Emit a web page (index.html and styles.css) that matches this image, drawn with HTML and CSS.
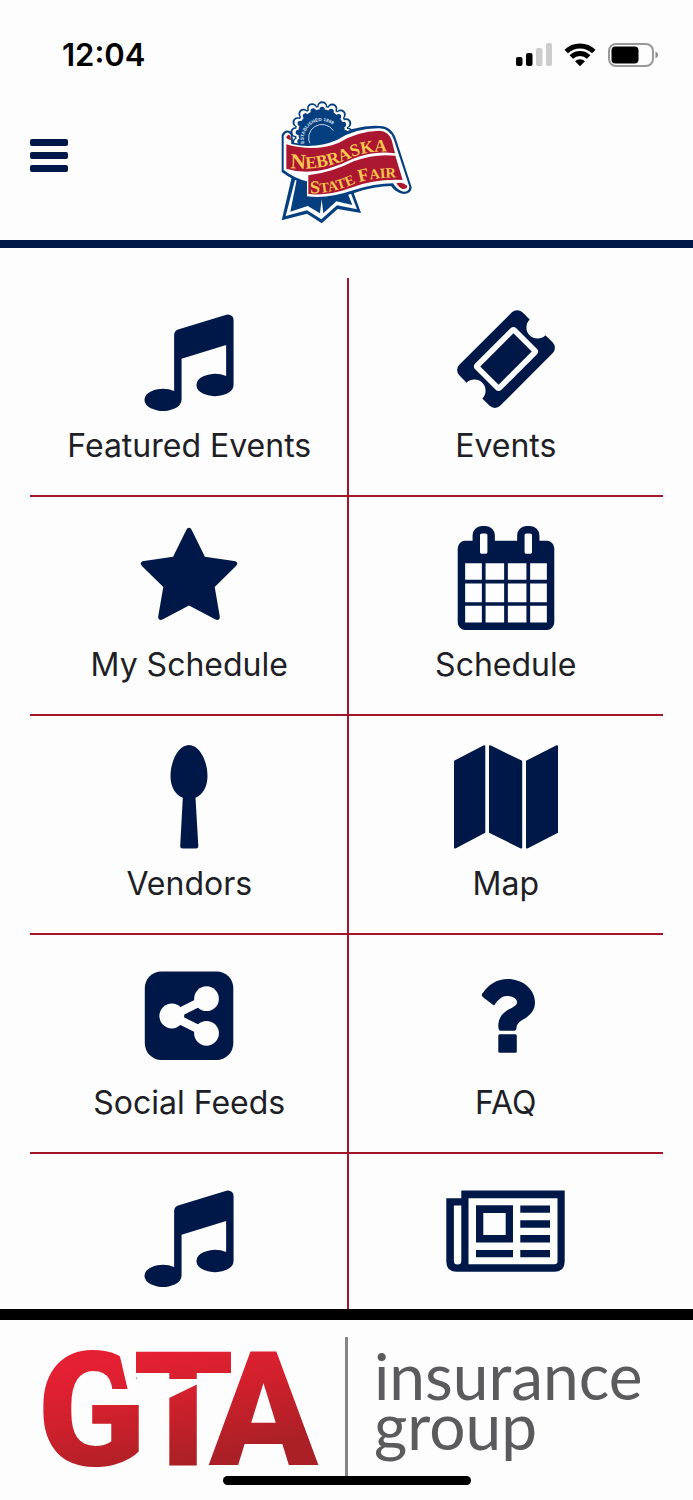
FILE: index.html
```html
<!DOCTYPE html>
<html lang="en">
<head>
<meta charset="utf-8">
<meta name="viewport" content="width=device-width, initial-scale=1">
<title>Nebraska State Fair</title>
<link rel="stylesheet" href="styles.css">
</head>
<body class="app">
<div class="status">
  <time class="status-time">12:04</time>
  <div class="status-icons">
    <svg class="signal" viewBox="0 0 36 24" aria-hidden="true">
      <rect x="0" y="14" width="6.500" height="9" rx="2"/>
      <rect x="10" y="10" width="6.500" height="13" rx="2"/>
      <rect class="dim" x="20" y="5" width="6.500" height="18" rx="2"/>
      <rect class="dim" x="30" y="0" width="6" height="23" rx="2"/>
    </svg>
    <svg class="wifi" viewBox="0 0 32 24" aria-hidden="true">
      <path class="wave" d="M2.200 8.600a19.500 19.500 0 0 1 27.600 0M7.300 14a12.300 12.300 0 0 1 17.400 0"/>
      <path d="M16 23.300l5-5a7 7 0 0 0-10 0z"/>
    </svg>
    <svg class="battery" viewBox="0 0 50 24" aria-hidden="true">
      <rect class="shell" x="1" y="1" width="44" height="22" rx="7"/>
      <rect x="3.500" y="3.500" width="27" height="17" rx="4"/>
      <path class="cap" d="M47.500 8.500q2.500 1 2.500 3.500t-2.500 3.500z"/>
    </svg>
  </div>
</div>

<header class="header">
  <button class="menu" type="button" aria-label="Menu"><span></span><span></span><span></span></button>
  <svg class="fair-logo" viewBox="48 30 396 372" role="img" aria-label="Nebraska State Fair">
    <path class="blue" d="M84 245L50 391L126 371L170 400L218 357L288 369L252 270z"/>
    <path class="white" d="M94 255L62 378L126 361L169 388L216 346L276 358L246 280z"/>
    <path class="blue" d="M98 255L76 365L128 348L165 370L170 328L175 370L214 334L262 345L240 290z"/>
    <circle class="blue" cx="170" cy="128" r="81"/>
    <circle class="beads blue-line wide" cx="170" cy="128" r="79" pathLength="16"/>
    <circle class="white" cx="170" cy="128" r="77"/>
    <circle class="beads white-line mid" cx="170" cy="128" r="77" pathLength="16"/>
    <circle class="blue" cx="170" cy="128" r="70"/>
    <circle class="beads blue-line small" cx="170" cy="128" r="70" pathLength="16"/>
    <path class="arc" d="M137 165A38 38 0 0 1 205 122"/>
    <path class="blue" d="M50 134Q62 112 82 128L84 158Q160 168 212 142Q270 104 345 108Q382 110 394 150L440 292Q440 312 415 312Q392 308 378 288Q330 288 270 308Q190 334 118 326V280Q85 272 50 246z"/>
    <path class="white" d="M56 137Q66 120 77 134L79 162Q150 178 216 150Q272 114 343 115Q376 116 387 150L433 290Q433 305 415 305Q396 300 384 280Q330 280 264 301Q190 327 126 319V274Q90 266 56 240z"/>
    <path class="red" d="M63 142Q71 128 76 139L78 150Q70 152 63 142z"/>
    <path class="red" d="M64 163Q150 188 222 158Q276 124 343 122Q370 123 380 150L390 190Q330 180 264 206Q150 264 64 236z"/>
    <path class="red" d="M130 256Q200 248 266 214Q330 190 391 197L413 270Q330 266 258 293Q190 318 130 312z"/>
    <path class="red" d="M394 280Q412 274 427 288Q427 298 412 297Q402 293 394 280z"/>
    <path id="seal-line" fill="none" d="M118 160A54 54 0 1 1 224 154"/>
    <path id="name-line" fill="none" d="M76 234Q170 244 256 204Q316 178 396 186"/>
    <path id="fair-line" fill="none" d="M136 310Q200 310 262 284Q320 260 420 262"/>
    <text class="seal-text"><textPath href="#seal-line">ESTABLISHED 1868</textPath></text>
    <text class="name-text"><textPath href="#name-line"><tspan class="initial">N</tspan>EBRASKA</textPath></text>
    <text class="name-text fair-text"><textPath href="#fair-line"><tspan class="initial">S</tspan>TATE <tspan class="initial">F</tspan>AIR</textPath></text>
  </svg>
</header>

<main class="content">
  <nav class="tiles">
    <a class="tile" href="#featured">
      <svg class="icon" viewBox="0 0 1792 1792" aria-hidden="true"><path d="M1664 224v1120q0 50-34 89t-86 60.500-103.500 32-96.500 10.500-96.500-10.500-103.500-32-86-60.500-34-89 34-89 86-60.500 103.500-32 96.500-10.500q105 0 192 39v-537l-768 237v709q0 50-34 89t-86 60.500-103.500 32-96.500 10.500-96.500-10.500-103.500-32-86-60.500-34-89 34-89 86-60.500 103.500-32 96.500-10.500q105 0 192 39v-967q0-31 19-56.500t49-35.500l832-256q12-4 28-4 40 0 68 28t28 68z"/></svg>
      <span class="label">Featured Events</span>
    </a>
    <a class="tile" href="#events">
      <svg class="icon" viewBox="0 0 1792 1792" aria-hidden="true"><path d="M1024 452l316 316-572 572-316-316zm-211 979l618-618q19-19 19-45t-19-45l-362-362q-18-18-45-18t-45 18l-618 618q-19 19-19 45t19 45l362 362q18 18 45 18t45-18zm889-637l-907 908q-37 37-90.500 37t-90.500-37l-126-126q56-56 56-136t-56-136-136-56-136 56l-125-126q-37-37-37-90.500t37-90.500l907-906q37-37 90.500-37t90.500 37l125 125q-56 56-56 136t56 136 136 56 136-56l126 125q37 37 37 90.500t-37 90.500z"/></svg>
      <span class="label">Events</span>
    </a>
    <a class="tile" href="#my-schedule">
      <svg class="icon" viewBox="0 0 1792 1792" aria-hidden="true"><path d="M1728 647q0 22-26 48l-363 354 86 500q1 7 1 20 0 21-10.500 35.500t-30.500 14.500q-19 0-40-12l-449-236-449 236q-22 12-40 12-21 0-31.500-14.500t-10.500-35.500q0-6 2-20l86-500-364-354q-25-27-25-48 0-37 56-46l502-73 225-455q19-41 49-41t49 41l225 455 502 73q56 9 56 46z"/></svg>
      <span class="label">My Schedule</span>
    </a>
    <a class="tile" href="#schedule">
      <svg class="icon" viewBox="0 0 1792 1792" aria-hidden="true"><path d="M192 1664h288v-288h-288v288zm352 0h320v-288h-320v288zm-352-352h288v-320h-288v320zm352 0h320v-320h-320v320zm-352-384h288v-288h-288v288zm736 736h320v-288h-320v288zm-384-736h320v-288h-320v288zm768 736h288v-288h-288v288zm-384-352h320v-320h-320v320zm-352-864v-288q0-13-9.500-22.500t-22.500-9.500h-64q-13 0-22.500 9.500t-9.500 22.500v288q0 13 9.500 22.500t22.500 9.500h64q13 0 22.500-9.500t9.500-22.500zm736 864h288v-320h-288v320zm-384-384h320v-288h-320v288zm384 0h288v-288h-288v288zm32-480v-288q0-13-9.500-22.500t-22.500-9.500h-64q-13 0-22.500 9.500t-9.500 22.500v288q0 13 9.500 22.500t22.500 9.500h64q13 0 22.500-9.500t9.500-22.500zm384-64v1280q0 52-38 90t-90 38h-1408q-52 0-90-38t-38-90v-1280q0-52 38-90t90-38h128v-96q0-66 47-113t113-47h64q66 0 113 47t47 113v96h384v-96q0-66 47-113t113-47h64q66 0 113 47t47 113v96h128q52 0 90 38t38 90z"/></svg>
      <span class="label">Schedule</span>
    </a>
    <a class="tile" href="#vendors">
      <svg class="icon" viewBox="0 0 104 104" aria-hidden="true"><path d="M52 0C62.500 0 70.500 16 70.500 31C70.500 42 65.500 50 58.500 52.700L61.300 101Q61.300 103.500 58.800 103.500H45.700Q43.200 103.500 43.200 101L45.800 52.700C38.500 50 33.500 42 33.500 31C33.500 16 41.500 0 52 0z"/></svg>
      <span class="label">Vendors</span>
    </a>
    <a class="tile" href="#map">
      <svg class="icon" viewBox="0 0 104 104" aria-hidden="true"><path class="sheet" d="M1 16.500L30.300 1.200V87.200L1 102.500zM36 1.200L67.200 16.500V102.500L36 87.200zM73 16.500L103 1.200V87.200L73 102.500z"/></svg>
      <span class="label">Map</span>
    </a>
    <a class="tile" href="#social">
      <svg class="icon" viewBox="0 0 104 104" aria-hidden="true"><rect x="7.800" y="7.400" width="88.500" height="88.500" rx="16.600"/><path class="link" d="M69.500 34.700L34.800 52L69.500 69.300"/><circle class="node" cx="34.800" cy="52" r="12.400"/><circle class="node" cx="69.500" cy="34.700" r="12.400"/><circle class="node" cx="69.500" cy="69.300" r="12.400"/></svg>
      <span class="label">Social Feeds</span>
    </a>
    <a class="tile" href="#faq">
      <svg class="icon" viewBox="0 0 104 104" aria-hidden="true"><path d="M28 30Q38 15 54 15C67 15 81 24 81 38.500C81 47 75 52 70 55C65 58 62.700 60 62.500 64Q62.500 66.700 60.500 66.700H46.500Q44.300 66.700 44.300 62C44.300 54 48 49 56 44.800C61 42.300 63 41 63 38C63 34 57 32 52.700 32C48 32 45 35 40.800 40.500Q40 41.600 38.800 40.800L28.800 33Q27.300 31.800 28 30z"/><rect x="44.300" y="70.300" width="18.500" height="18.400" rx="1.500"/></svg>
      <span class="label">FAQ</span>
    </a>
    <a class="tile" href="#music" aria-label="Music">
      <svg class="icon" viewBox="0 0 1792 1792" aria-hidden="true"><path d="M1664 224v1120q0 50-34 89t-86 60.500-103.500 32-96.500 10.500-96.500-10.500-103.500-32-86-60.500-34-89 34-89 86-60.500 103.500-32 96.500-10.500q105 0 192 39v-537l-768 237v709q0 50-34 89t-86 60.500-103.500 32-96.500 10.500-96.500-10.500-103.500-32-86-60.500-34-89 34-89 86-60.500 103.500-32 96.500-10.500q105 0 192 39v-967q0-31 19-56.500t49-35.500l832-256q12-4 28-4 40 0 68 28t28 68z"/></svg>
    </a>
    <a class="tile" href="#news" aria-label="News">
      <svg class="icon icon-wide" viewBox="0 0 119 104" aria-hidden="true"><path fill-rule="evenodd" d="M15.300 7.500H118.700V78.500Q118.700 88.700 108.500 88.700H10.500Q.3 88.700 .3 78.500V15.200H15.300zM22.500 15.200V81.300H108.500Q111.500 81.300 111.500 78.500V15.200zM7.900 22.500V78Q7.900 81.500 11.600 81.500T15.300 78V22.500zM30 22.300H67V59.500H30zM37.300 30V52H59.700V30zM74.300 22.500H104V29.800H74.300zM74.300 37.300H104V44.700H74.300zM74.300 52H104V59.500H74.300zM74.300 66.900H104V74.300H74.300zM30 66.900H67V74.300H30z"/></svg>
    </a>
  </nav>
</main>

<footer class="sponsor">
  <a class="sponsor-link" href="#sponsor">
    <svg class="gta" viewBox="0 0 276 114" role="img" aria-label="GTA">
      <defs>
        <linearGradient id="gta-red" gradientUnits="userSpaceOnUse" x1="120" y1="0" x2="145" y2="114">
          <stop offset="0" stop-color="#e42032"/><stop offset=".4" stop-color="#d2202c"/><stop offset="1" stop-color="#aa2026"/>
        </linearGradient>
      </defs>
      <text class="gta-text" y="114" x="-6 90 166">GTA</text>
      <path class="cut" d="M75 -3H93V28H112V44H86zM120 28H190V33H155L124 48H120z"/>
    </svg>
    <span class="rule"></span>
    <span class="sponsor-name">insurance<br>group</span>
  </a>
  <div class="home-bar"></div>
</footer>
</body>
</html>
```

FILE: styles.css
```css
* { box-sizing: border-box; }

.app {
  --navy: #001848;
  --paper: #fdfdfd;
  --crimson: #a3162a;
  display: flex;
  flex-direction: column;
  height: 100vh;
  margin: 0;
  background: var(--paper);
  color: #1d2025;
  font-family: Inter, "Liberation Sans", sans-serif;
}

.status {
  display: flex;
  flex: none;
  align-items: center;
  justify-content: space-between;
  height: 92px;
  padding: 18px 35px 0 62px;
  color: #000;
}
.status-time { font-size: 31px; font-weight: 600; line-height: 40px; }
.status-icons { display: flex; align-items: center; gap: 12px; }
.status-icons svg { display: block; height: 24px; }
.signal { width: 36px; }
.signal .dim { fill: #ccc; }
.wifi { width: 32px; }
.wave { fill: none; stroke: #000; stroke-width: 5; }
.battery { width: 50px; }
.shell { fill: none; stroke: #999; stroke-width: 2; }
.cap { fill: #888; }

.header {
  display: grid;
  flex: none;
  grid-template-columns: 1fr auto 1fr;
  align-items: start;
  padding: 8px 30px 16px;
  border-bottom: 8px solid var(--navy);
}
.menu {
  display: grid;
  gap: 6px;
  width: 38px;
  margin: 39px 0 0;
  padding: 0;
  border: 0;
  background: none;
}
.menu span { height: 7px; border-radius: 2px; background: var(--navy); }

.fair-logo { display: block; width: 132px; height: 124px; }
.blue { fill: #053f80; }
.white { fill: #fff; }
.red { fill: #ab1630; }
.beads { fill: none; stroke-linecap: round; stroke-dasharray: 0 1; }
.blue-line { stroke: #053f80; }
.white-line { stroke: #fff; }
.wide { stroke-width: 30px; }
.mid { stroke-width: 22px; }
.small { stroke-width: 16px; }
.arc { fill: none; stroke: #c4d3e6; stroke-width: 3; }
.seal-text { fill: #dbe5f2; font: bold 14px "Liberation Sans", sans-serif; }
.name-text { fill: #fbc650; font: bold 52px "Liberation Serif", serif; }
.name-text .initial { font-size: 64px; }
.fair-text { font-size: 43px; }
.fair-text .initial { font-size: 54px; }

.content { flex: 1; min-height: 0; overflow: hidden; padding: 30px 30px 0; }
.tiles {
  display: grid;
  grid-template-columns: calc(50% + 2px) 1fr;
}
.tile {
  display: flex;
  flex-direction: column;
  align-items: center;
  gap: 11px;
  min-height: 219px;
  padding: 29px 0 25px;
  border-bottom: 2px solid var(--crimson);
  color: inherit;
  text-decoration: none;
}
.tile:nth-child(odd) { padding-left: 2px; border-right: 2px solid var(--crimson); }
.icon { display: block; width: 104px; height: 104px; fill: var(--navy); }
.icon-wide { width: 119px; }
.sheet { stroke: var(--navy); stroke-width: 2; stroke-linejoin: round; }
.link { fill: none; stroke: var(--paper); stroke-width: 8.500; }
.node { fill: var(--paper); }
.label { font-size: 32px; line-height: 48px; }

.sponsor {
  position: relative;
  flex: none;
  border-top: 11px solid #000;
}
.sponsor-link {
  display: flex;
  height: 180px;
  padding: 17px 40px 24px 43px;
  color: #5b5b5d;
  text-decoration: none;
}
.gta { display: block; width: 276px; height: 114px; margin-top: 14px; overflow: visible; }
.gta-text { fill: url(#gta-red); font: 900 160px Roboto, sans-serif; }
.cut { fill: var(--paper); }
.rule { width: 3px; margin: 0 26px; background: #868686; }
.sponsor-name { margin-top: 14px; font: 64px/50px Lato, sans-serif; }
.home-bar {
  position: absolute;
  bottom: 15px;
  left: 50%;
  width: 248px;
  height: 9px;
  margin-left: -124px;
  border-radius: 5px;
  background: #000;
}
```
